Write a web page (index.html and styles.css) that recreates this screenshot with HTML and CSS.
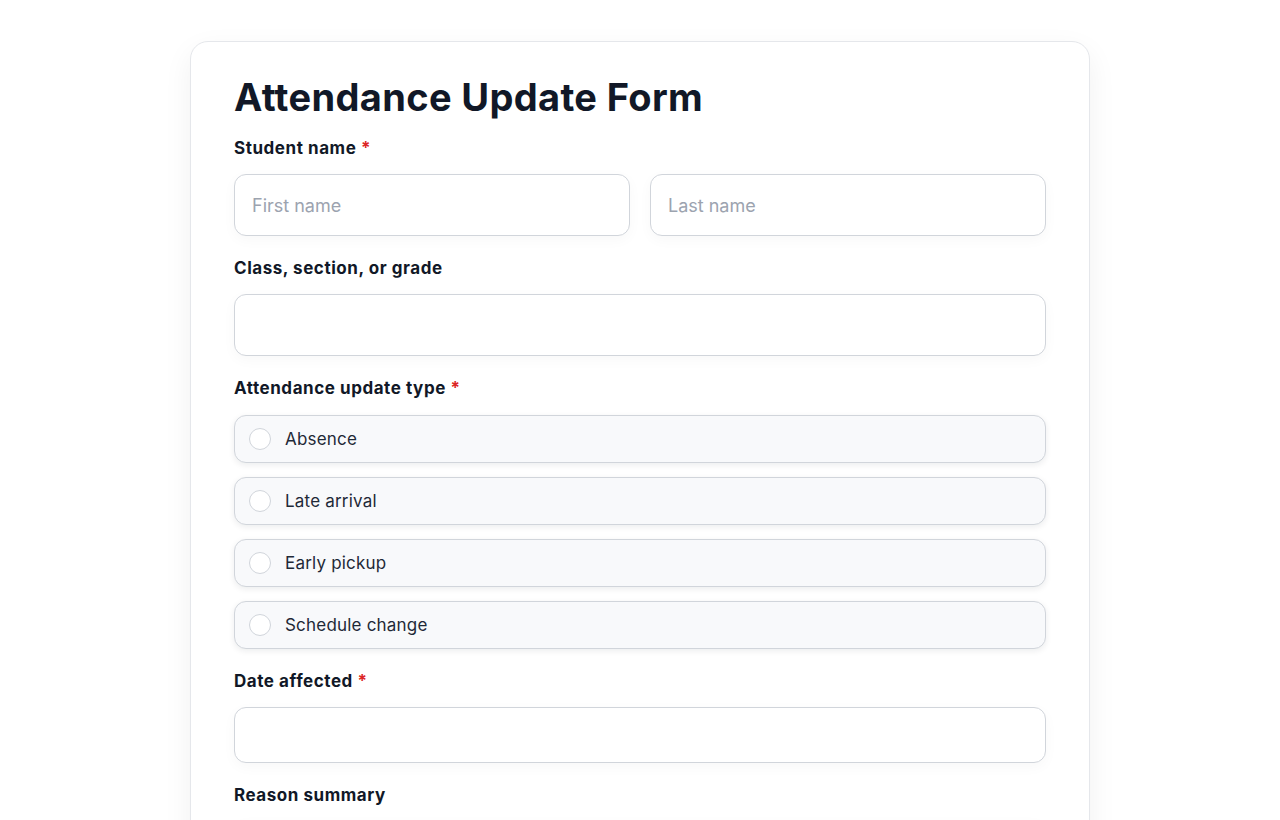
FILE: index.html
```html
<!DOCTYPE html>
<html lang="en">
<head>
    <meta charset="UTF-8">
    <meta name="viewport" content="width=device-width, initial-scale=1.0">
    <title>Attendance Update Form</title>
    <link rel="stylesheet" href="styles.css">
</head>
<body>
    <form class="form-card">
        <h1 class="form-title">Attendance Update Form</h1>

        <div class="field">
            <label class="field-label">Student name <span class="required">*</span></label>
            <div class="name-row">
                <input class="text-input" type="text" placeholder="First name">
                <input class="text-input" type="text" placeholder="Last name">
            </div>
        </div>

        <div class="field">
            <label class="field-label">Class, section, or grade</label>
            <input class="text-input" type="text">
        </div>

        <div class="field">
            <label class="field-label">Attendance update type <span class="required">*</span></label>
            <div class="option-list">
                <label class="option"><span class="radio"></span>Absence</label>
                <label class="option"><span class="radio"></span>Late arrival</label>
                <label class="option"><span class="radio"></span>Early pickup</label>
                <label class="option"><span class="radio"></span>Schedule change</label>
            </div>
        </div>

        <div class="field">
            <label class="field-label">Date affected <span class="required">*</span></label>
            <input class="text-input date-input" type="text">
        </div>

        <div class="field">
            <label class="field-label">Reason summary</label>
            <textarea class="text-input text-area"></textarea>
        </div>
    </form>
</body>
</html>
```

FILE: styles.css
```css
body {
    margin: 0;
    background: #ffffff;
    font-family: Inter, 'Noto Sans', sans-serif;
    color: #111827;
}
.form-card {
    width: 900px;
    box-sizing: border-box;
    margin: 41px auto 40px;
    padding: 32px 43px 40px;
    background: #ffffff;
    border: 1px solid #e5e7eb;
    border-radius: 18px;
    box-shadow: 0 10px 30px rgba(17, 24, 39, 0.06);
}
.form-title {
    margin: 0 0 16px;
    font-size: 38px;
    line-height: 46px;
    font-weight: 700;
    letter-spacing: 0.35px;
    color: #111827;
}
.field {
    margin-bottom: 20px;
}
.field-label {
    display: block;
    margin-bottom: 14px;
    font-size: 17px;
    line-height: 24px;
    font-weight: 700;
    letter-spacing: 0.55px;
    color: #111827;
}
.required {
    color: #dc2626;
}
.name-row {
    display: grid;
    grid-template-columns: 1fr 1fr;
    gap: 20px;
}
.text-input {
    display: block;
    width: 100%;
    box-sizing: border-box;
    height: 62px;
    padding: 0 17px;
    font-family: inherit;
    font-size: 18px;
    color: #111827;
    background: #ffffff;
    border: 1px solid #d1d5db;
    border-radius: 12px;
    box-shadow: 0 4px 14px rgba(17, 24, 39, 0.03);
    outline: none;
}
.text-input::placeholder {
    color: #9ca3af;
}
.name-row + .text-input,
.field:nth-child(3) .text-input {
    margin-top: 1px;
}
.date-input {
    height: 56px;
}
.text-area {
    height: 120px;
    resize: none;
}
.option-list {
    display: flex;
    flex-direction: column;
    gap: 14px;
    padding-top: 1px;
}
.option {
    display: flex;
    align-items: center;
    height: 48px;
    box-sizing: border-box;
    padding: 0 14px;
    font-size: 17px;
    letter-spacing: 0.2px;
    color: #1f2937;
    background: #f8f9fb;
    border: 1px solid #d1d5db;
    border-radius: 12px;
    box-shadow: 0 2px 6px rgba(17, 24, 39, 0.08);
}
.radio {
    width: 22px;
    height: 22px;
    box-sizing: border-box;
    margin-right: 14px;
    border: 1px solid #d1d5db;
    border-radius: 50%;
    background: #ffffff;
}
```
